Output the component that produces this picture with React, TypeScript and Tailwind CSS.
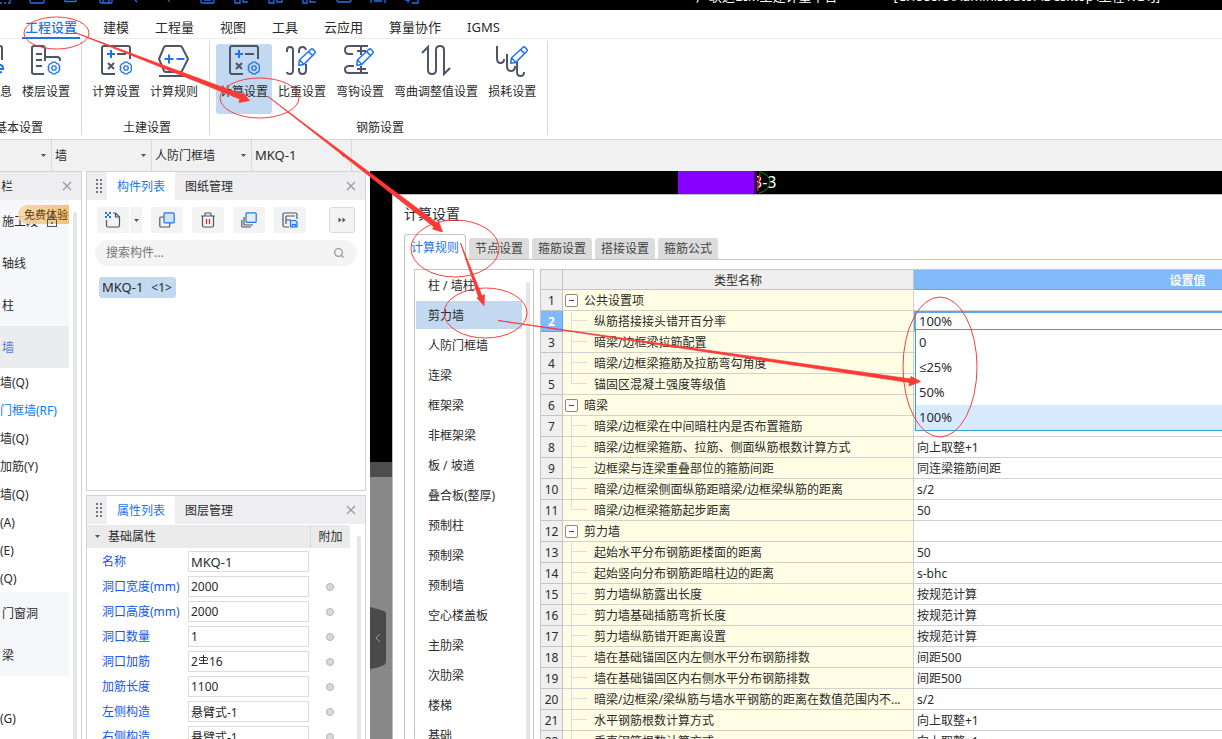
import React, { useState } from 'react';
import type { ReactNode } from 'react';

const INK = '#4d5566';
const BLUE = '#1f75e8';

/* ---------- ribbon icons (32 x 34 grid) ---------- */

function Glyph({ children }: { children: ReactNode }) {
  return (
    <svg viewBox="0 0 32 34" className="h-[34px] w-8" fill="none" stroke={INK} strokeWidth="2" aria-hidden="true">
      {children}
    </svg>
  );
}

function Gear({ x, y }: { x: number; y: number }) {
  return (
    <g transform={`translate(${x} ${y})`} stroke={BLUE} strokeWidth="1.3">
      <path d="M-1.7-5.8h3.4l.8 1.5 1.7.1 1.7 2.9-.9 1.3.9 1.3-1.7 2.9-1.7.1-.8 1.5h-3.4l-.8-1.5-1.7-.1-1.7-2.9.9-1.3-.9-1.3 1.7-2.9 1.7-.1z" />
      <circle r="2.2" />
    </g>
  );
}

function Pencil({ x, y }: { x: number; y: number }) {
  return (
    <g transform={`translate(${x} ${y})`} stroke={BLUE} strokeWidth="1.5" strokeLinejoin="round">
      <path d="M.8 17.2 1.4 12 13 1.2q1-.8 2 .2l1.8 1.8q1 1 0 2L5.8 16.4z" fill="#fff" />
      <path d="m10.6 3.6 4.2 4.2M1.8 12.2l4 4" />
    </g>
  );
}

const InfoIcon = () => (
  <Glyph>
    <path d="M28 30H4V2h24q2 0 2 2v12" />
    <path d="M25 25h6q0-4-3-4t-3 4q0 4 5 3" stroke={BLUE} />
  </Glyph>
);
const FloorIcon = () => (
  <Glyph>
    <path d="M14 30H4q-2 0-2-2V4q0-2 2-2h8q3 0 3 3v8h12q3 0 3 3v1" />
    <path d="M15 13v4M6 10h6M6 16h6M6 22h6" />
    <Gear x={24} y={24} />
  </Glyph>
);
const CalcIcon = () => (
  <Glyph>
    <path d="M15 30H4q-2 0-2-2V4q0-2 2-2h24q2 0 2 2v11" />
    <path d="M7 10h8M11 6v8" stroke={BLUE} />
    <path d="M17 10h9M8 19l6 6M14 19l-6 6" />
    <Gear x={26} y={24} />
  </Glyph>
);
const RuleIcon = () => (
  <Glyph>
    <path d="M8 2h14q1 0 2 1l6 12-6 12q-1 1-2 1H8q-1 0-2-1L1 15 6 3q1-1 2-1zM1 32h30" />
    <path d="M6.500 15h9M11 10.500v9M18.500 15h8" stroke={BLUE} />
  </Glyph>
);
const WeightIcon = () => (
  <Glyph>
    <path d="M1 8V6q0-3 3-3t3 3v20q0 4-3 4t-3-2M13 9V7q0-4 3.500-4 3 0 3.500 3M13 24v2q0 4 3.500 4t3.500-4v-6" />
    <Pencil x={12} y={4} />
  </Glyph>
);
const HookIcon = () => (
  <Glyph>
    <path d="M9 10H5q-4 0-4-4t4-4h19M24 29H5q-4 0-4-3.500t4-3.500h5M13 7h9M17 2v9M13 25h9M17 22v7" />
    <Pencil x={12} y={4} />
  </Glyph>
);
const BendIcon = () => (
  <Glyph>
    <path d="m2 9 6-6v23q0 4 4 4t4-4V6q0-4 4-4t4 4v24l6-6" />
  </Glyph>
);
const LossIcon = () => (
  <Glyph>
    <path d="M1 2v12q0 5 3.500 5t3.500-4M11 10v12q0 5 4 5t4-5M21 18v10q0 4 3.500 4t3.500-4" />
    <Pencil x={14} y={2} />
  </Glyph>
);

/* ---------- small pieces ---------- */

function Close({ label }: { label: string }) {
  return (
    <button type="button" aria-label={label} className="grid size-4 place-items-center">
      <svg viewBox="0 0 10 10" className="size-2.5" stroke="#999" strokeWidth="1.2" aria-hidden="true">
        <path d="m1 1 8 8M9 1 1 9" />
      </svg>
    </button>
  );
}

function Triangle() {
  return (
    <svg viewBox="0 0 5 3" className="h-[3px] w-[5px]" aria-hidden="true">
      <path d="M0 0h5L2.500 3z" fill="#555" />
    </svg>
  );
}

function PanelHeader({ tabs, label }: { tabs: [string, string]; label: string }) {
  return (
    <div className="flex h-7 shrink-0 items-stretch bg-[#eeeef0] pr-1.5">
      <div className="grid w-5 place-items-center">
        <svg viewBox="0 0 6 14" className="ml-1 h-3.5 w-1.5" fill="#777" aria-hidden="true">
          {[0, 4, 8, 12].map((y) => (
            <g key={y}>
              <rect y={y} width="2" height="2" />
              <rect x="4" y={y} width="2" height="2" />
            </g>
          ))}
        </svg>
      </div>
      <button type="button" className="bg-white px-2.5 pt-0.5 text-[#1f75e8]">{tabs[0]}</button>
      <button type="button" className="px-2.5 pt-0.5">{tabs[1]}</button>
      <div className="ml-auto flex items-center">
        <Close label={label} />
      </div>
    </div>
  );
}

/* ---------- ribbon ---------- */

type Tool = { text: string; icon: ReactNode; on?: boolean };

function RibbonGroup({ title, tools, className = '' }: { title: string; tools: Tool[]; className?: string }) {
  return (
    <section className={`flex shrink-0 flex-col border-r border-[#d9d9d9] pr-[7px] pl-1.5 ${className}`}>
      <div className="flex justify-end gap-0.5 pt-[3px]">
        {tools.map((t) => (
          <button
            type="button"
            key={t.text}
            className={`flex h-[70px] flex-col items-center rounded-[3px] px-1 leading-4 ${t.on ? 'bg-[#c2d9f1]' : ''}`}
          >
            {t.icon}
            <span className="mt-1.5 whitespace-nowrap">{t.text}</span>
          </button>
        ))}
      </div>
      <h2 className="mt-1.5 pl-1 text-center leading-4">{title}</h2>
    </section>
  );
}

function TitleBar() {
  return (
    <header className="flex h-2.5 shrink-0 items-start justify-between overflow-hidden bg-black">
      <svg viewBox="0 0 430 10" className="h-2.5 w-[430px] shrink-0" fill="none" stroke={BLUE} strokeWidth="1.300" aria-hidden="true">
        <path d="M0 3h2M4 3h2M8 3h2V0M30 0v2q0 1 1 1h12q1 0 1-1V0M65 0v1.500h11V0M100 0v2q0 1 1 1h10q1 0 1-1V0M103 3V0M109 3V0M201 0v2q0 1 1 1h11q1 0 1-1V0M204 0h7M235 0v3h5V0M243 0v2h4v1M269 0v3h5V0M277 0v2h5V0M303 0v3h4V0M310 0v2h5v1M337 0q0 2 2 2h10q2 0 2-2M371 3V0M374 1h8M385 0v3M405 0h5M408 0v3M412 3h6V0" />
        <path d="m135 0 2 2" />
        <path d="m168 0 2 2" stroke="#555" />
      </svg>
      <div className="-mt-3 flex gap-14 pr-[62px] text-[13px] leading-4 whitespace-nowrap text-white">
        <span>广联达BIM土建计量平台</span>
        <span>[C:\Users\Administrator\Desktop\工程1.GTJ]</span>
      </div>
    </header>
  );
}

const MENU = ['工程设置', '建模', '工程量', '视图', '工具', '云应用', '算量协作', 'IGMS'];

function MenuBar() {
  return (
    <nav className="flex h-[29px] shrink-0 border-b border-[#ececec] pl-[22px] text-[13px]">
      {MENU.map((m, i) => (
        <a
          key={m}
          href="#menu"
          className={
            i === 0
              ? '-mb-px mr-2.5 border-b-2 border-[#1f75e8] px-[3px] pt-[5px] leading-6 font-medium text-[#1f75e8]'
              : 'px-[13px] pt-[5px] leading-6'
          }
        >
          {m}
        </a>
      ))}
    </nav>
  );
}

const COMBOS = [
  { label: '楼层', value: '' },
  { label: '构件类别', value: '墙' },
  { label: '构件类型', value: '人防门框墙' },
  { label: '构件', value: 'MKQ-1' },
];

function ComboBar() {
  return (
    <div className="flex h-[31px] shrink-0 bg-[#f1f1f1]">
      {COMBOS.map((c, i) => (
        <div
          key={c.label}
          className={`relative flex items-center border-r border-[#d9d9d9] ${i === 0 ? 'w-[52px]' : 'w-[100px]'}`}
        >
          <select
            aria-label={c.label}
            className={`h-full w-full appearance-none bg-transparent pl-[3px] outline-none ${c.value === 'MKQ-1' ? 'text-[13px]' : ''}`}
          >
            <option>{c.value}</option>
          </select>
          <span className="pointer-events-none absolute right-[5px]">
            <Triangle />
          </span>
        </div>
      ))}
    </div>
  );
}

/* ---------- navigation ---------- */

const WALLS = ['墙(Q)', '门框墙(RF)', '墙(Q)', '加筋(Y)', '墙(Q)', '(A)', '(E)', '(Q)'];

function NavGroup({ text, on = false }: { text: string; on?: boolean }) {
  return (
    <button
      type="button"
      className={`block h-[42px] w-full pt-0.5 pl-0.5 text-left ${on ? 'bg-[#ebecf0] text-[#3f7fe0]' : 'bg-[#f5f7fa]'}`}
    >
      {text}
    </button>
  );
}

function Sidebar() {
  return (
    <aside className="flex w-[82px] shrink-0 flex-col overflow-hidden border-t border-r border-[#d4d4d4]">
      <div className="flex h-7 shrink-0 items-center justify-between bg-[#eeeef0] pr-1.5">
        <h2 className="pt-0.5 pl-px">栏</h2>
        <Close label="关闭导航栏" />
      </div>
      <div className="flex flex-1 gap-1 overflow-hidden">
        <div className="w-[69px]">
          <div className="relative">
            <NavGroup text="施工段" />
            <span className="absolute top-[5px] right-0 rounded-l-full bg-linear-to-r from-[#f3d9a8]/90 to-[#efbf68]/90 pr-px pl-1.5 text-[11px] leading-[19px] text-[#5f3410]">
              免费体验
            </span>
            <svg viewBox="0 0 10 12" className="absolute top-[15px] right-3 h-3 w-2.5" fill="none" stroke="#4d5566" aria-hidden="true">
              <path d="M3 5V3q0-2 2-2t2 2v2" />
              <rect x=".5" y="4.500" width="9" height="7" />
              <path d="M5 7v2" strokeWidth="1.500" />
            </svg>
          </div>
          <NavGroup text="轴线" />
          <NavGroup text="柱" />
          <NavGroup text="墙" on />
          <ul>
            {WALLS.map((w, i) => (
              <li key={i} className={`h-7 leading-[30px] whitespace-nowrap ${i === 1 ? 'text-[#0a7cff]' : ''}`}>
                {w}
              </li>
            ))}
          </ul>
          <NavGroup text="门窗洞" />
          <NavGroup text="梁" />
          <ul className="pt-7">
            <li className="h-7 leading-[30px]">(G)</li>
          </ul>
        </div>
        <div className="mt-3 w-1 rounded-t-full bg-[#e6e6e6]" />
      </div>
    </aside>
  );
}

/* ---------- component list ---------- */

function ToolButton({ label, className, children }: { label: string; className: string; children: ReactNode }) {
  return (
    <button type="button" aria-label={label} className={`grid h-[26px] place-items-center rounded-[3px] bg-[#f3f3f3] ${className}`}>
      {children}
    </button>
  );
}

function SmallIcon({ children }: { children: ReactNode }) {
  return (
    <svg viewBox="0 0 16 16" className="size-4" fill="none" stroke={INK} strokeWidth="1.200" aria-hidden="true">
      {children}
    </svg>
  );
}

function ComponentPanel() {
  return (
    <section className="flex h-[320px] shrink-0 flex-col border border-[#d4d4d4]">
      <PanelHeader tabs={['构件列表', '图纸管理']} label="关闭构件列表" />
      <div className="flex gap-[9px] px-2.5 pt-[7px]">
        <div className="flex gap-px">
          <ToolButton label="新建" className="w-8">
            <SmallIcon>
              <path d="M1.500 8v5.500q0 1.500 1.500 1.500h10q1.500 0 1.500-1.500V5l-4-4H8M10.500 1v4h4" />
              <g fill={BLUE} stroke="none">
                <path d="M0 0h2v2H0zM4 0h2v2H4zM2 2h2v2H2zM0 4h2v2H0zM4 4h2v2H4z" />
              </g>
            </SmallIcon>
          </ToolButton>
          <ToolButton label="新建选项" className="w-3">
            <Triangle />
          </ToolButton>
        </div>
        <ToolButton label="复制" className="w-8">
          <SmallIcon>
            <rect x=".8" y="5" width="10" height="10" rx="1" />
            <rect x="5" y=".8" width="10.200" height="10" rx="1" fill="#cfe2fb" stroke={BLUE} />
          </SmallIcon>
        </ToolButton>
        <ToolButton label="删除" className="w-8">
          <SmallIcon>
            <path d="M1 4h14M5 4V2q0-1 1-1h4q1 0 1 1v2M2.500 4v9.500q0 1.500 1.500 1.500h8q1.500 0 1.500-1.500V4" />
            <path d="M6.500 7v5M9.500 7v5" stroke="#e0262c" />
          </SmallIcon>
        </ToolButton>
        <ToolButton label="层间复制" className="w-8">
          <SmallIcon>
            <path d="M3 5v7q0 1 1 1h8M.8 8v6q0 1 1 1H10" />
            <rect x="5" y=".8" width="10.200" height="9.500" rx="1" fill="#e1eefd" stroke={BLUE} />
          </SmallIcon>
        </ToolButton>
        <ToolButton label="存档" className="w-8">
          <SmallIcon>
            <path d="M7 15H2.500Q1 15 1 13.500v-11Q1 1 2.500 1h11Q15 1 15 2.500V7M4 4h9M4 4v8M4 8h5" />
            <path d="M8.500 8.500h5l1.500 1.500v5H8.500zM10.500 15v-2.500h3V15" fill="#cfe2fb" stroke={BLUE} />
          </SmallIcon>
        </ToolButton>
        <ToolButton label="更多" className="ml-auto w-[26px] border border-[#d9d9d9]">
          <svg viewBox="0 0 8 6" className="h-1.5 w-2" fill={INK} aria-hidden="true">
            <path d="m.5.5 3 2.500-3 2.500zM4.500.5l3 2.500-3 2.500z" />
          </svg>
        </ToolButton>
      </div>
      <div className="mx-2 mt-[7px] flex h-[26px] items-center rounded-full bg-[#f4f4f4] pr-[13px] pl-[11px]">
        <input aria-label="搜索构件" placeholder="搜索构件..." className="w-full bg-transparent outline-none placeholder:text-[#757575]" />
        <svg viewBox="0 0 10 10" className="size-2.5 shrink-0" fill="none" stroke="#999" strokeWidth="1.300" aria-hidden="true">
          <circle cx="4.500" cy="4.500" r="3.800" />
          <path d="m7.200 7.200 2.300 2.300" />
        </svg>
      </div>
      <div className="px-3 pt-[11px]">
        <button type="button" className="flex h-[21px] items-center gap-2 rounded-[3px] bg-[#c2d9f1] pr-1 pl-[3px]">
          <span className="text-[13px]">MKQ-1</span>
          <span>&lt;1&gt;</span>
        </button>
      </div>
    </section>
  );
}

/* ---------- properties ---------- */

const PROPS: [string, string][] = [
  ['名称', 'MKQ-1'],
  ['洞口宽度(mm)', '2000'],
  ['洞口高度(mm)', '2000'],
  ['洞口数量', '1'],
  ['洞口加筋', ''],
  ['加筋长度', '1100'],
  ['左侧构造', '悬臂式-1'],
  ['右侧构造', '悬臂式-1'],
];

function RebarMark() {
  return (
    <svg viewBox="0 0 11 10" className="mb-1 h-2.5 w-[11px]" fill="none" stroke="#333" aria-hidden="true">
      <path d="M5.500 0v9M1 8.500h9" />
      <rect x="1.500" y="2.500" width="8" height="3" rx="1" />
    </svg>
  );
}

function PropertyPanel() {
  const [values, setValues] = useState(PROPS.map((p) => p[1]));
  return (
    <section className="flex min-h-0 flex-1 flex-col overflow-hidden border border-b-0 border-[#d4d4d4]">
      <PanelHeader tabs={['属性列表', '图层管理']} label="关闭属性列表" />
      <div className="flex min-h-0 flex-1 justify-between pr-1">
        <div className="w-[263px] pt-px">
          <div className="flex h-[23px] items-center bg-[#ebebec]">
            <button type="button" className="flex h-full flex-1 items-center gap-2 border-r border-[#d9d9d9] pl-2">
              <Triangle />
              基础属性
            </button>
            <span className="w-[39px] text-center">附加</span>
          </div>
          <div className="pt-px">
            {PROPS.map(([name], i) => (
              <div key={name} className="flex h-[25px] items-center pl-[15px]">
                <label htmlFor={`prop-${i}`} className="w-[86px] whitespace-nowrap text-[#1557f0]">
                  {name}
                </label>
                {i === 4 ? (
                  <button id="prop-4" type="button" className="flex h-[21px] w-[121px] items-center border border-[#dcdcdc] px-0.5 text-left">
                    2<RebarMark />16
                  </button>
                ) : (
                  <input
                    id={`prop-${i}`}
                    value={values[i]}
                    onChange={(e) => setValues(values.map((v, j) => (j === i ? e.target.value : v)))}
                    className={`h-[21px] w-[121px] border border-[#dcdcdc] px-0.5 outline-none ${i === 0 ? 'text-[13px]' : ''}`}
                  />
                )}
                {i > 0 && (
                  <input
                    type="checkbox"
                    aria-label={`${name} 附加`}
                    className="ml-[17px] size-2 appearance-none rounded-full border border-[#b4b4b4] bg-[#dadada]"
                  />
                )}
              </div>
            ))}
          </div>
        </div>
        <div className="mt-3 w-1 rounded-t-full bg-[#e6e6e6]" />
      </div>
    </section>
  );
}

/* ---------- settings dialog ---------- */

const CATEGORIES = [
  '柱 / 墙柱', '剪力墙', '人防门框墙', '连梁', '框架梁', '非框架梁', '板 / 坡道', '叠合板(整厚)',
  '预制柱', '预制梁', '预制墙', '空心楼盖板', '主肋梁', '次肋梁', '楼梯', '基础',
];

type Row = { name: string; value?: string; group?: boolean; last?: boolean };

const ROWS: Row[] = [
  { name: '公共设置项', group: true },
  { name: '纵筋搭接接头错开百分率' },
  { name: '暗梁/边框梁拉筋配置' },
  { name: '暗梁/边框梁箍筋及拉筋弯勾角度' },
  { name: '锚固区混凝土强度等级值', last: true },
  { name: '暗梁', group: true },
  { name: '暗梁/边框梁在中间暗柱内是否布置箍筋' },
  { name: '暗梁/边框梁箍筋、拉筋、侧面纵筋根数计算方式', value: '向上取整+1' },
  { name: '边框梁与连梁重叠部位的箍筋间距', value: '同连梁箍筋间距' },
  { name: '暗梁/边框梁侧面纵筋距暗梁/边框梁纵筋的距离', value: 's/2' },
  { name: '暗梁/边框梁箍筋起步距离', value: '50', last: true },
  { name: '剪力墙', group: true },
  { name: '起始水平分布钢筋距楼面的距离', value: '50' },
  { name: '起始竖向分布钢筋距暗柱边的距离', value: 's-bhc' },
  { name: '剪力墙纵筋露出长度', value: '按规范计算' },
  { name: '剪力墙基础插筋弯折长度', value: '按规范计算' },
  { name: '剪力墙纵筋错开距离设置', value: '按规范计算' },
  { name: '墙在基础锚固区内左侧水平分布钢筋排数', value: '间距500' },
  { name: '墙在基础锚固区内右侧水平分布钢筋排数', value: '间距500' },
  { name: '暗梁/边框梁/梁纵筋与墙水平钢筋的距离在数值范围内不...', value: 's/2' },
  { name: '水平钢筋根数计算方式', value: '向上取整+1' },
  { name: '垂直钢筋根数计算方式', value: '向上取整+1' },
];

const OPTIONS = ['0', '≤25%', '50%', '100%'];

function ValueEditor() {
  const [value, setValue] = useState('100%');
  return (
    <div className="relative text-[13px]">
      <input
        aria-label="纵筋搭接接头错开百分率"
        value={value}
        onChange={(e) => setValue(e.target.value)}
        className="block h-5 w-full border-t-2 border-l-2 border-[#62a4ea] bg-white pb-0.5 pl-[3px] outline-none"
      />
      <ul role="listbox" aria-label="可选值" className="absolute top-[18px] left-px z-10 w-full border border-[#35a3d0] bg-white">
        {OPTIONS.map((o) => (
          <li key={o} role="option" aria-selected={o === value}>
            <button
              type="button"
              onClick={() => setValue(o)}
              className={`block h-[25px] w-full pb-0.5 pl-[3px] text-left ${o === value ? 'bg-[#d8eaff]' : ''}`}
            >
              {o}
            </button>
          </li>
        ))}
      </ul>
    </div>
  );
}

function RulesTable() {
  return (
    <div className="min-w-0 flex-1 overflow-hidden">
      <table className="w-full min-w-[922px] table-fixed border-separate border-spacing-0 border-t border-l border-[#c4c4c4] leading-4">
        <colgroup>
          <col className="w-[22px]" />
          <col className="w-[351px]" />
          <col />
        </colgroup>
        <thead>
          <tr className="h-5">
            <th aria-label="序号" className="border-r border-b border-[#c4c4c4] bg-[#efefef] p-0" />
            <th className="border-r border-b border-[#c4c4c4] bg-[#efefef] px-0 pt-0.5 pb-0 font-normal">类型名称</th>
            <th className="border-r border-b border-[#62a4ea] bg-[#80bafb] px-0 pt-0.5 pb-0 text-white">设置值</th>
          </tr>
        </thead>
        <tbody>
          {ROWS.map((r, i) => (
            <tr key={r.name} className="h-[21px]">
              <th
                scope="row"
                className={`border-r border-b px-0 pt-0.5 pb-0 ${i === 1 ? 'border-[#62a4ea] bg-[#80bafb] text-white' : 'border-[#c4c4c4] bg-[#efefef] font-normal'}`}
              >
                {i + 1}
              </th>
              <td className="border-r border-b border-[#d0d0d0] bg-[#fffde3] p-0">
                {r.group ? (
                  <div className="flex h-5 items-center gap-1.5 pl-0.5">
                    <button
                      type="button"
                      aria-label={`折叠${r.name}`}
                      className="grid size-[13px] place-items-center rounded-[2px] border border-[#888] bg-white"
                    >
                      <span className="h-px w-[5px] bg-[#444]" />
                    </button>
                    <span className="pt-0.5">{r.name}</span>
                  </div>
                ) : (
                  <div className="flex h-5 items-center pl-2">
                    <span className="flex h-5 w-[23px] flex-col">
                      <span className="h-2.5 w-4 border-b border-l border-[#dedede]" />
                      <span className={`w-4 flex-1 border-l ${r.last ? 'border-transparent' : 'border-[#dedede]'}`} />
                    </span>
                    <span className="pt-0.5">{r.name}</span>
                  </div>
                )}
              </td>
              <td className={`border-r border-b border-[#d0d0d0] bg-white ${i === 1 ? 'p-0' : 'pt-0.5 pr-0 pb-0 pl-[3px]'}`}>
                {i === 1 ? <ValueEditor /> : r.value}
              </td>
            </tr>
          ))}
        </tbody>
      </table>
    </div>
  );
}

function SettingsDialog() {
  return (
    <section role="dialog" aria-label="计算设置" className="flex min-h-0 min-w-0 flex-1 flex-col border-t border-l border-[#bdbdbd] bg-white pl-[11px]">
      <h1 className="h-[39px] shrink-0 text-sm leading-[37px]">计算设置</h1>
      <div className="flex shrink-0 items-end gap-[3px]">
        <button type="button" className="relative -mb-px h-[26px] w-[62px] rounded-t-[4px] border border-b-0 border-[#c4c4c4] bg-white text-[#1f75e8]">
          计算规则
        </button>
        {['节点设置', '箍筋设置', '搭接设置', '箍筋公式'].map((t) => (
          <button type="button" key={t} className="h-[21px] rounded-t-[3px] bg-[#dcdcdc] px-1.5 text-[#444]">
            {t}
          </button>
        ))}
      </div>
      <div className="flex min-h-0 flex-1 gap-1.5 overflow-hidden border-t border-l border-[#c4c4c4] pt-[9px] pl-[9px]">
        <div className="flex w-[120px] shrink-0 justify-between overflow-hidden border border-b-0 border-[#c4c4c4] pr-[3px] pl-px">
          <ul className="w-[106px]">
            {CATEGORIES.map((c, i) => (
              <li key={c} className="h-[30px] py-px">
                <button type="button" className={`h-7 w-full pt-0.5 pl-3 text-left ${i === 1 ? 'bg-[#c2d9f1]' : ''}`}>
                  {c}
                </button>
              </li>
            ))}
          </ul>
          <div className="mt-3 w-1 rounded-t-full bg-[#e6e6e6]" />
        </div>
        <RulesTable />
      </div>
    </section>
  );
}

function Canvas() {
  return (
    <main className="relative flex min-w-0 flex-1 flex-col bg-black">
      <div className="flex h-[23px] shrink-0 pl-[308px]">
        <div className="w-[76px] bg-[#8800ff]" />
        <div className="w-[3px] bg-[#35006a]" />
        <div className="relative overflow-hidden text-base leading-[23px] text-white">
          <span className="-ml-1">3-3</span>
          <svg viewBox="0 0 14 23" className="absolute top-0 left-0 h-[23px] w-3.5" fill="none" aria-hidden="true">
            <path d="M2 1q11 2 11 10T2 22" stroke="#0b8a1c" />
            <path d="M3 3 1 13v7" stroke="#e02020" strokeWidth="1.500" />
          </svg>
        </div>
      </div>
      <div className="flex min-h-0 flex-1">
        <div className="flex w-[22px] shrink-0 flex-col">
          <div className="h-[268px]" />
          <div className="h-[15px] bg-[#4d4d4d]" />
          <div className="flex-1 bg-[#888]" />
        </div>
        <SettingsDialog />
      </div>
      <button type="button" aria-label="收起面板" className="absolute top-[436px] left-0">
        <svg viewBox="0 0 16 62" className="h-[62px] w-4" aria-hidden="true">
          <path d="M0 0q8 2 14 4 2 1 2 3v48q0 2-2 3-6 3-14 4z" fill="#4a4a4a" />
          <path d="m10 27-4 4 4 4" fill="none" stroke="#999" />
        </svg>
      </button>
    </main>
  );
}

/* ---------- hand-drawn guide marks ---------- */

function GuideMarks() {
  return (
    <svg viewBox="0 0 1222 739" className="pointer-events-none absolute top-0 left-0 z-20 h-[739px] w-[1222px]" aria-hidden="true">
      <g fill="none" stroke="#f5413d">
        <ellipse cx="56.500" cy="33" rx="32.500" ry="16" />
        <ellipse cx="259.500" cy="98" rx="39.500" ry="20" />
        <ellipse cx="455" cy="248.500" rx="44" ry="28.500" />
        <ellipse cx="485.500" cy="313" rx="41.500" ry="25" />
        <ellipse cx="940" cy="367" rx="37" ry="70" />
      </g>
      <g fill="#fb3a36" stroke="#fb3a36" strokeWidth=".8" strokeLinejoin="round">
        <path d="M75 32.500 242 94.500 243 92.500 249.500 100.500 239 102.500 240 99z" />
        <path d="M268 96.500 437 223 438.500 221 442.500 232 432.500 229 434 227z" />
        <path d="M460.500 243 482 296 484.500 294.500 484 305.500 477 298 478.500 297z" />
        <path d="M498 320.500 910.500 379 911 376.500 920.500 381.500 909 386 909.500 382.500z" />
      </g>
    </svg>
  );
}

export default function App() {
  return (
    <div className="relative flex h-screen flex-col overflow-hidden bg-white font-['Noto_Sans','Open_Sans','DejaVu_Sans','Noto_Sans_CJK_SC',sans-serif] text-xs text-[#2b2b2b]">
      <TitleBar />
      <MenuBar />
      <div className="flex h-[101px] shrink-0 border-b border-[#d4d4d4] pt-0.5 pb-1">
        <RibbonGroup
          className="-ml-[46px]"
          title="基本设置"
          tools={[
            { text: '工程信息', icon: <InfoIcon /> },
            { text: '楼层设置', icon: <FloorIcon /> },
          ]}
        />
        <RibbonGroup
          title="土建设置"
          tools={[
            { text: '计算设置', icon: <CalcIcon /> },
            { text: '计算规则', icon: <RuleIcon /> },
          ]}
        />
        <RibbonGroup
          title="钢筋设置"
          tools={[
            { text: '计算设置', icon: <CalcIcon />, on: true },
            { text: '比重设置', icon: <WeightIcon /> },
            { text: '弯钩设置', icon: <HookIcon /> },
            { text: '弯曲调整值设置', icon: <BendIcon /> },
            { text: '损耗设置', icon: <LossIcon /> },
          ]}
        />
      </div>
      <ComboBar />
      <div className="flex min-h-0 flex-1 gap-1">
        <Sidebar />
        <div className="flex w-[280px] shrink-0 flex-col gap-1">
          <ComponentPanel />
          <PropertyPanel />
        </div>
        <Canvas />
      </div>
      <GuideMarks />
    </div>
  );
}
